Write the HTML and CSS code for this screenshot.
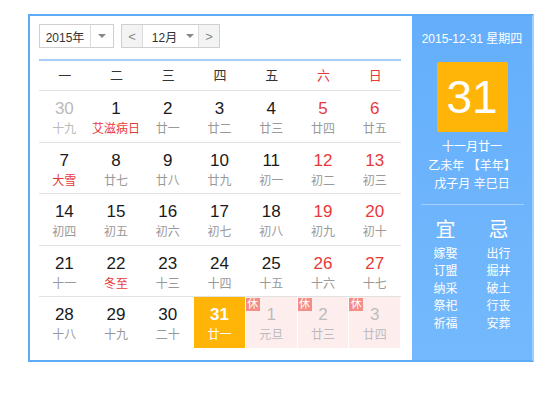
FILE: index.html
```html
<!DOCTYPE html>
<html lang="zh-CN">
<head>
<meta charset="utf-8">
<title>万年历</title>
<link rel="stylesheet" href="styles.css">
</head>
<body>
<div class="cal">
  <div class="main">
    <div class="toolbar">
      <div class="sel year">
        <span class="val">2015年</span>
        <span class="drop"><i class="tri"></i></span>
      </div>
      <div class="sel month">
        <span class="nav">&lt;</span>
        <span class="val">12月<i class="tri"></i></span>
        <span class="nav">&gt;</span>
      </div>
    </div>
    <div class="weekhead">
      <span>一</span><span>二</span><span>三</span><span>四</span><span>五</span><span class="red">六</span><span class="red">日</span>
    </div>
    <div class="row">
      <div class="cell other"><b>30</b><small>十九</small></div>
      <div class="cell"><b>1</b><small class="red">艾滋病日</small></div>
      <div class="cell"><b>2</b><small>廿一</small></div>
      <div class="cell"><b>3</b><small>廿二</small></div>
      <div class="cell"><b>4</b><small>廿三</small></div>
      <div class="cell wk"><b>5</b><small>廿四</small></div>
      <div class="cell wk"><b>6</b><small>廿五</small></div>
    </div>
    <div class="row">
      <div class="cell"><b>7</b><small class="red">大雪</small></div>
      <div class="cell"><b>8</b><small>廿七</small></div>
      <div class="cell"><b>9</b><small>廿八</small></div>
      <div class="cell"><b>10</b><small>廿九</small></div>
      <div class="cell"><b>11</b><small>初一</small></div>
      <div class="cell wk"><b>12</b><small>初二</small></div>
      <div class="cell wk"><b>13</b><small>初三</small></div>
    </div>
    <div class="row">
      <div class="cell"><b>14</b><small>初四</small></div>
      <div class="cell"><b>15</b><small>初五</small></div>
      <div class="cell"><b>16</b><small>初六</small></div>
      <div class="cell"><b>17</b><small>初七</small></div>
      <div class="cell"><b>18</b><small>初八</small></div>
      <div class="cell wk"><b>19</b><small>初九</small></div>
      <div class="cell wk"><b>20</b><small>初十</small></div>
    </div>
    <div class="row">
      <div class="cell"><b>21</b><small>十一</small></div>
      <div class="cell"><b>22</b><small class="red">冬至</small></div>
      <div class="cell"><b>23</b><small>十三</small></div>
      <div class="cell"><b>24</b><small>十四</small></div>
      <div class="cell"><b>25</b><small>十五</small></div>
      <div class="cell wk"><b>26</b><small>十六</small></div>
      <div class="cell wk"><b>27</b><small>十七</small></div>
    </div>
    <div class="row">
      <div class="cell"><b>28</b><small>十八</small></div>
      <div class="cell"><b>29</b><small>十九</small></div>
      <div class="cell"><b>30</b><small>二十</small></div>
      <div class="cell today"><b>31</b><small>廿一</small></div>
      <div class="cell rest"><em class="tag">休</em><b>1</b><small>元旦</small></div>
      <div class="cell rest"><em class="tag">休</em><b>2</b><small>廿三</small></div>
      <div class="cell rest"><em class="tag">休</em><b>3</b><small>廿四</small></div>
    </div>
  </div>
  <div class="side">
    <div class="date">2015-12-31 星期四</div>
    <div class="big">31</div>
    <div class="lunar">
      <p>十一月廿一</p>
      <p>乙未年 【羊年】</p>
      <p>戊子月 辛巳日</p>
    </div>
    <div class="sep"></div>
    <div class="yiji">
      <div class="col">
        <h3>宜</h3>
        <p>嫁娶</p><p>订盟</p><p>纳采</p><p>祭祀</p><p>祈福</p>
      </div>
      <div class="col">
        <h3>忌</h3>
        <p>出行</p><p>掘井</p><p>破土</p><p>行丧</p><p>安葬</p>
      </div>
    </div>
  </div>
</div>
</body>
</html>
```

FILE: styles.css
```css
* { box-sizing: border-box; }
html, body { margin: 0; padding: 0; background: #fff; }
body {
  font-family: "Liberation Sans", "Noto Sans CJK SC", sans-serif;
  color: #333;
}
.cal {
  display: flex;
  margin: 14px 0 0 28px;
  width: 506px;
  height: 348px;
  border: 2px solid #5eabf7;
  border-right-color: #9fd0ff;
}
.main {
  width: 382px;
  padding: 8px 11px 0 9px;
}
.toolbar {
  display: flex;
  gap: 7px;
  height: 24px;
}
.sel {
  display: flex;
  height: 24px;
  border: 1px solid #cfcfcf;
  font-size: 12px;
  color: #333;
  background: #fff;
}
.sel .val {
  display: flex;
  align-items: center;
  justify-content: center;
}
.year { width: 75px; }
.year .val { width: 51px; border-right: 1px solid #dcdcdc; }
.year .drop { flex: 1; display: flex; align-items: center; justify-content: center; }
.tri {
  display: inline-block;
  width: 0;
  height: 0;
  border-left: 4px solid transparent;
  border-right: 4px solid transparent;
  border-top: 4px solid #888;
}
.month { width: 99px; }
.month .nav {
  width: 21px;
  display: flex;
  align-items: center;
  justify-content: center;
  background: #f3f3f3;
  color: #888;
  font-size: 13px;
}
.month .nav:first-child { border-right: 1px solid #dcdcdc; }
.month .nav:last-child { border-left: 1px solid #dcdcdc; }
.month .val { flex: 1; gap: 9px; padding-left: 5px; }
.weekhead {
  margin-top: 11px;
  border-top: 2px solid #a6d0fa;
  display: grid;
  grid-template-columns: repeat(7, 1fr);
  height: 31px;
  align-items: center;
  font-size: 13px;
  color: #333;
  padding-bottom: 2px;
}
.weekhead span { text-align: center; }
.red { color: #e8393a; }
.row {
  display: grid;
  grid-template-columns: repeat(7, 1fr);
  height: 51.6px;
  border-top: 1px solid #e2e2e2;
}
.cell {
  position: relative;
  display: flex;
  flex-direction: column;
  align-items: center;
  padding-top: 8px;
  border-right: 1px solid transparent;
  background-clip: padding-box;
}
.cell b {
  font-weight: normal;
  font-size: 17px;
  line-height: 20px;
  color: #1a1a1a;
}
.cell small {
  font-size: 12px;
  line-height: 14px;
  margin-top: 3px;
  color: #999;
}
.cell small.red { color: #e8393a; }
.cell.wk b { color: #e8393a; }
.cell.other b, .cell.other small { color: #bbb; }
.cell.today { background-color: #ffb507; }
.cell.today b, .cell.today small { color: #fff; }
.cell.today b { font-weight: bold; }
.cell.rest { background-color: #fdeded; }
.cell.rest b, .cell.rest small { color: #bcbcbc; }
.tag {
  position: absolute;
  left: 0;
  top: 1px;
  width: 14px;
  height: 13px;
  background: #f28d88;
  color: #fff;
  font-style: normal;
  font-size: 11px;
  line-height: 13px;
  text-align: center;
}
.side {
  flex: 1;
  background: linear-gradient(#64aefb, #74b9fd);
  color: #fff;
  display: flex;
  flex-direction: column;
  align-items: center;
  padding-top: 16px;
}
.date { font-size: 12px; line-height: 14px; }
.big {
  margin-top: 16px;
  width: 71px;
  height: 70px;
  border-radius: 2px;
  background: #ffb507;
  font-size: 46px;
  line-height: 70px;
  text-align: center;
}
.lunar { margin-top: 6px; text-align: center; }
.lunar p { margin: 0; font-size: 12px; line-height: 18.5px; }
.sep {
  margin-top: 10px;
  width: 103px;
  height: 1px;
  background: #a3d0fd;
}
.yiji {
  display: flex;
  gap: 13px;
  margin-top: 13px;
}
.col { width: 40px; text-align: center; }
.col h3 {
  margin: 0 0 4px;
  font-size: 20px;
  font-weight: normal;
  line-height: 24px;
}
.col p { margin: 0; font-size: 12px; line-height: 17.5px; }
```
